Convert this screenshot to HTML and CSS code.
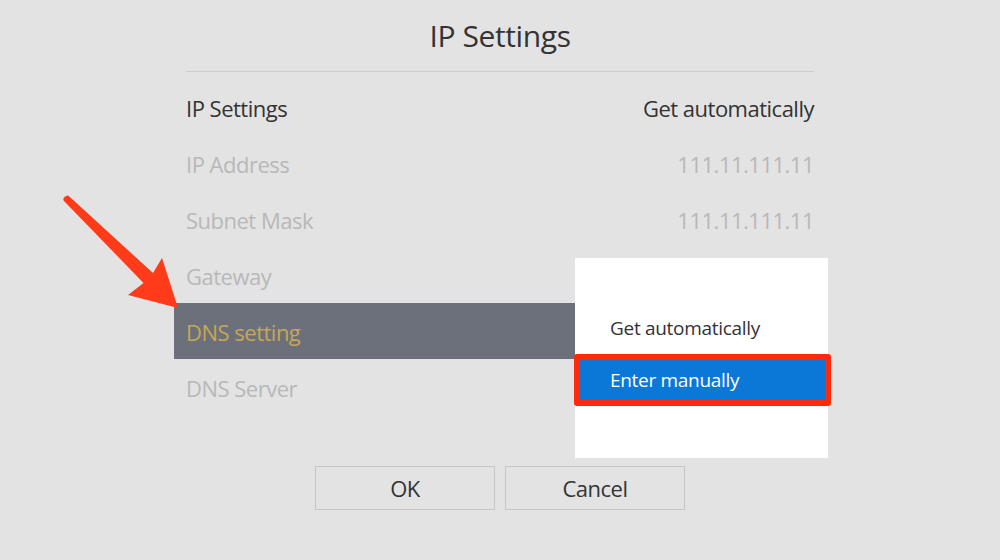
FILE: index.html
```html
<!DOCTYPE html>
<html>
<head>
<meta charset="utf-8">
<link rel="stylesheet" href="styles.css">
</head>
<body>
<div class="screen">
  <h1 class="title">IP Settings</h1>
  <div class="rule"></div>
  <div class="rows">
    <div class="row"><span>IP Settings</span><span>Get automatically</span></div>
    <div class="row dim"><span>IP Address</span><span>111.11.111.11</span></div>
    <div class="row dim"><span>Subnet Mask</span><span>111.11.111.11</span></div>
    <div class="row dim"><span>Gateway</span><span></span></div>
    <div class="row sel"><span>DNS setting</span><span></span></div>
    <div class="row dim"><span>DNS Server</span><span></span></div>
  </div>
  <div class="buttons">
    <button class="btn">OK</button>
    <button class="btn">Cancel</button>
  </div>
  <div class="popup">
    <div class="opt">Get automatically</div>
    <div class="opt active">Enter manually</div>
  </div>
  <svg class="arrow" width="200" height="320" viewBox="0 0 200 320">
    <path d="M68.2 195.5 L153 273 L162 258 L178 308 L128 295 L143.5 283 L63.5 200.5 Q62.5 196.5 68.2 195.5 Z" fill="#ff3b1a"/>
  </svg>
</div>
</body>
</html>
```
FILE: styles.css
```css
* { box-sizing: border-box; margin: 0; padding: 0; }
html, body { width: 1000px; height: 560px; overflow: hidden; }
body { background: #e3e3e3; font-family: "Open Sans", "Noto Sans", sans-serif; color: #333; }
.screen { position: relative; width: 1000px; height: 560px; display: flex; flex-direction: column; align-items: center; }
.title { font-weight: 400; font-size: 30px; height: 71px; line-height: 71px; letter-spacing: -0.4px; color: #333; }
.rule { width: 628px; height: 1px; background: #cdcdcd; }
.rows { margin-top: 7px; width: 652px; display: flex; flex-direction: column; }
.row { height: 56px; display: flex; justify-content: space-between; align-items: center; padding: 2px 12px 0; font-size: 22px; letter-spacing: -0.5px; color: #333; }
.row.dim { color: #b8b8b8; }
.row.sel { background: #6c707b; color: #c6a756; }
.buttons { margin-top: 51px; display: flex; gap: 10px; }
.btn { width: 180px; height: 44px; background: #e3e3e3; border: 1px solid #c6c6c6; font-family: inherit; font-size: 22px; color: #333; letter-spacing: -0.5px; }
.popup { position: absolute; left: 575px; top: 258px; width: 253px; height: 200px; background: #fff; padding-top: 50px; }
.opt { height: 40px; line-height: 40px; padding-left: 35px; font-size: 19px; color: #333; letter-spacing: -0.3px; }
.opt.active { margin: 6px -3px 0 -1px; height: 52px; line-height: 40px; border: 6px solid #ff2a0c; border-radius: 3px; background: #0b78d8; color: #fff; padding-left: 30px; }
.arrow { position: absolute; left: 0; top: 0; }
```
